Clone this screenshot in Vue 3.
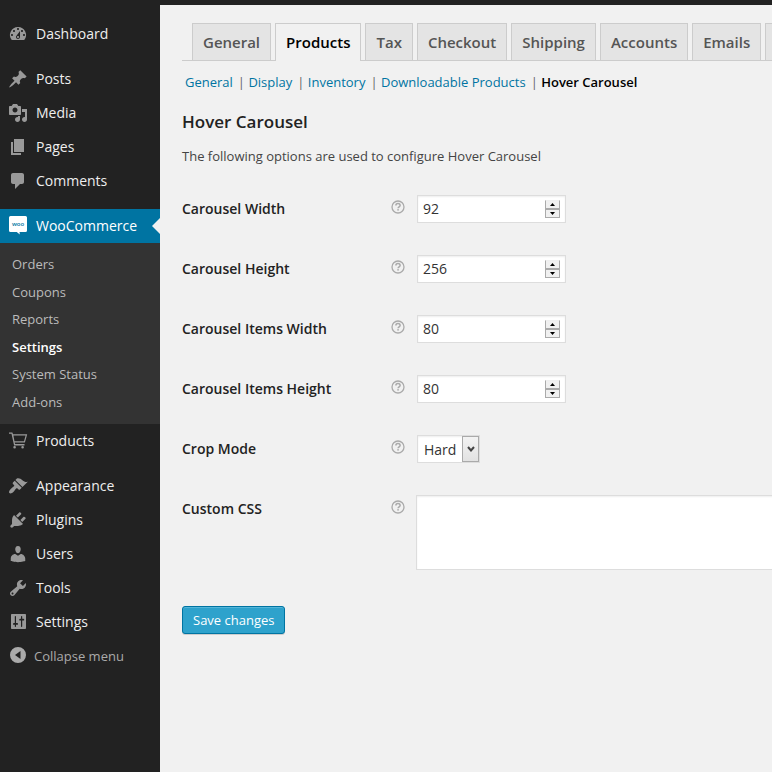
<script setup>
import { ref } from 'vue'

const icons = {
  dashboard: 'M3.76 16h12.48A7.998 7.998 0 0 0 10 3a7.998 7.998 0 0 0-6.24 13zM10 4c.55 0 1 .45 1 1s-.45 1-1 1-1-.45-1-1 .45-1 1-1zM6 6c.55 0 1 .45 1 1s-.45 1-1 1-1-.45-1-1 .45-1 1-1zm8 0c.55 0 1 .45 1 1s-.45 1-1 1-1-.45-1-1 .45-1 1-1zm-5.37 5.55L12 7v6c0 1.1-.9 2-2 2s-2-.9-2-2c0-.57.24-1.08.63-1.45zM4 10c.55 0 1 .45 1 1s-.45 1-1 1-1-.45-1-1 .45-1 1-1zm12 0c.55 0 1 .45 1 1s-.45 1-1 1-1-.45-1-1 .45-1 1-1zm-5 3c0-.55-.45-1-1-1s-1 .45-1 1 .45 1 1 1 1-.45 1-1z',
  posts: 'M10.44 3.02l1.82-1.82 6.36 6.35-1.83 1.82c-1.05-.68-2.48-.57-3.41.36l-.75.75c-.92.93-1.04 2.35-.35 3.41l-1.83 1.82-2.41-2.41-2.8 2.79c-.42.42-3.38 2.71-3.8 2.29s1.86-3.39 2.28-3.81l2.79-2.79L4.1 9.36l1.83-1.82c1.05.69 2.48.57 3.4-.36l.75-.75c.93-.92 1.05-2.35.36-3.41z',
  media: 'M13 11V4c0-.55-.45-1-1-1h-1.67L9 1H5L3.67 3H2c-.55 0-1 .45-1 1v7c0 .55.45 1 1 1h10c.55 0 1-.45 1-1zM7 4.5c1.38 0 2.5 1.12 2.5 2.5S8.38 9.5 7 9.5 4.5 8.38 4.5 7 5.62 4.5 7 4.5zM14 6h5v10.5c0 1.38-1.12 2.5-2.5 2.5S14 17.88 14 16.5s1.12-2.5 2.5-2.5c.17 0 .34.02.5.05V9h-3V6zm-4 8.05V13h2v3.5c0 1.38-1.12 2.5-2.5 2.5S7 17.88 7 16.5 8.12 14 9.5 14c.17 0 .34.02.5.05z',
  pages: 'M6 15V2h10v13H6zm-1 1h8v2H3V5h2v11z',
  comments: 'M5 2h9c1.1 0 2 .9 2 2v7c0 1.1-.9 2-2 2h-2l-5 5v-5H5c-1.1 0-2-.9-2-2V4c0-1.1.9-2 2-2z',
  products: 'M1 1.5h3.4l.6 1.8h14.2l-2.3 8.2H6.6l.6 1.6h9.3v1.3H6.1L3.5 2.8H1zM5.4 4.5l1.1 5.8h9.5l1.6-5.8zM6.6 15a1.3 1.3 0 1 1 0 2.6 1.3 1.3 0 0 1 0-2.6zM14.6 15a1.3 1.3 0 1 1 0 2.6 1.3 1.3 0 0 1 0-2.6z',
  appearance: 'M14.48 11.06L7.41 3.99l1.5-1.5c.5-.56 2.3-.47 3.51.32 1.21.8 1.43 1.28 2.91 2.1 1.18.64 2.45 1.26 4.45.85zm-.71.71L6.7 4.7 4.93 6.47c-.39.39-.39 1.02 0 1.41l1.06 1.06c.39.39.39 1.03 0 1.42-.6.6-1.43 1.11-2.21 1.69-.35.26-.7.53-1.01.84C1.43 14.23.4 16.08 1.4 17.07c.99 1 2.84-.03 4.18-1.36.31-.31.58-.66.85-1.02.57-.78 1.08-1.61 1.69-2.21.39-.39 1.02-.39 1.41 0l1.06 1.06c.39.39 1.02.39 1.41 0z',
  plugins: 'M13.11 4.36L9.87 7.6 8 5.73l3.24-3.24c.35-.34 1.05-.2 1.56.32.52.51.66 1.21.31 1.55zm-8 1.77l.91-1.12 9.01 9.01-1.19.84c-.71.71-2.63 1.16-3.82 1.16H6.14L4.9 17.26c-.59.59-1.54.59-2.12 0-.59-.58-.59-1.53 0-2.12l1.24-1.24v-3.88c0-1.13.4-3.19 1.09-3.89zm7.26 3.97l3.24-3.24c.34-.35 1.04-.21 1.55.31.52.51.66 1.21.31 1.55l-3.24 3.25z',
  users: 'M10 9.25c-2.27 0-2.73-3.44-2.73-3.44C7 4.02 7.82 2 9.97 2c2.16 0 2.98 2.02 2.71 3.81 0 0-.41 3.44-2.68 3.44zm0 2.57L12.72 10c2.39 0 4.52 2.33 4.52 4.53v2.49s-3.65 1.13-7.24 1.13c-3.65 0-7.24-1.13-7.24-1.13v-2.49c0-2.25 1.94-4.48 4.47-4.48z',
  tools: 'M16.68 9.77c-1.34 1.34-3.3 1.67-4.95.99l-5.41 6.52c-.99.99-2.59.99-3.58 0s-.99-2.59 0-3.57l6.52-5.42c-.68-1.65-.35-3.61.99-4.95 1.28-1.28 3.12-1.62 4.72-1.06l-2.89 2.89 2.82 2.82 2.86-2.87c.53 1.58.18 3.39-1.08 4.65zM3.81 16.21c.4.39 1.04.39 1.43 0 .4-.4.4-1.04 0-1.43-.39-.4-1.03-.4-1.43 0-.39.39-.39 1.03 0 1.43z',
  settings: 'M18 16V3c0-.55-.45-1-1-1H4c-.55 0-1 .45-1 1v13c0 .55.45 1 1 1h13c.55 0 1-.45 1-1zM8 11h1c.55 0 1 .3 1 .9s-.45.9-1 .9H8v1.7c0 .28-.22.5-.6.5s-.6-.22-.6-.5v-1.7H6c-.55 0-1-.3-1-.9s.45-.9 1-.9h.8V4.5c0-.28.22-.5.6-.5s.6.22.6.5V11zm5-2.4h-.8c-.55 0-1-.3-1-.9s.45-.9 1-.9h.8V4.5c0-.28.22-.5.6-.5s.6.22.6.5v2.3h1c.55 0 1 .3 1 .9s-.45.9-1 .9h-1v5.9c0 .28-.22.5-.6.5s-.6-.22-.6-.5V8.6z',
}

const menuGroups = [
  [{ label: 'Dashboard', icon: 'dashboard' }],
  [
    { label: 'Posts', icon: 'posts' },
    { label: 'Media', icon: 'media' },
    { label: 'Pages', icon: 'pages' },
    { label: 'Comments', icon: 'comments' },
  ],
  [
    {
      label: 'WooCommerce',
      icon: 'woo',
      current: true,
      children: ['Orders', 'Coupons', 'Reports', 'Settings', 'System Status', 'Add-ons'],
    },
    { label: 'Products', icon: 'products' },
  ],
  [
    { label: 'Appearance', icon: 'appearance' },
    { label: 'Plugins', icon: 'plugins' },
    { label: 'Users', icon: 'users' },
    { label: 'Tools', icon: 'tools' },
    { label: 'Settings', icon: 'settings' },
  ],
]

const tabs = ['General', 'Products', 'Tax', 'Checkout', 'Shipping', 'Accounts', 'Emails']
const sections = ['General', 'Display', 'Inventory', 'Downloadable Products', 'Hover Carousel']

const fields = ref([
  { id: 'carousel-width', label: 'Carousel Width', type: 'number', value: 92 },
  { id: 'carousel-height', label: 'Carousel Height', type: 'number', value: 256 },
  { id: 'items-width', label: 'Carousel Items Width', type: 'number', value: 80 },
  { id: 'items-height', label: 'Carousel Items Height', type: 'number', value: 80 },
  { id: 'crop-mode', label: 'Crop Mode', type: 'select', value: 'Hard' },
  { id: 'custom-css', label: 'Custom CSS', type: 'textarea', value: '' },
])
</script>

<template>
  <div class="page">
    <aside class="sidebar">
      <nav aria-label="Main menu">
        <ul v-for="(group, g) in menuGroups" :key="g" class="menu-group">
          <li v-for="item in group" :key="item.label">
            <a href="#" class="menu-link" :class="{ current: item.current }">
              <svg v-if="item.icon === 'woo'" class="icon" viewBox="0 0 20 20" aria-hidden="true">
                <path fill="#fff" d="M3 0h14.500a1.500 1.500 0 0 1 1.500 1.500v13a1.500 1.500 0 0 1-1.500 1.500h-6l.3 2.500-3-2.500H2.500A1.500 1.500 0 0 1 1 14.500v-13A1.500 1.500 0 0 1 2.500 0z" />
                <text class="woo-text" x="10" y="10" text-anchor="middle">woo</text>
              </svg>
              <svg v-else class="icon" viewBox="0 0 20 20" aria-hidden="true">
                <path fill="currentColor" fill-rule="evenodd" :d="icons[item.icon]" />
              </svg>
              <span class="menu-label">{{ item.label }}</span>
            </a>
            <ul v-if="item.children" class="submenu">
              <li v-for="child in item.children" :key="child">
                <a href="#" :class="{ active: child === 'Settings' }">{{ child }}</a>
              </li>
            </ul>
          </li>
        </ul>
      </nav>
      <button type="button" class="collapse">
        <svg class="icon" viewBox="0 0 20 20" aria-hidden="true">
          <path fill="currentColor" fill-rule="evenodd" d="M10 1a8 8 0 1 1 0 16 8 8 0 0 1 0-16zM12.500 5L7 9l5.500 4z" />
        </svg>
        <span>Collapse menu</span>
      </button>
    </aside>

    <div class="body">
      <header class="topbar"></header>
      <main class="content">
        <nav class="tabs" aria-label="Settings tabs">
          <a v-for="tab in tabs" :key="tab" href="#" class="tab" :class="{ active: tab === 'Products' }">{{ tab }}</a>
          <a href="#" class="tab" aria-label="More settings"></a>
        </nav>
        <ul class="sections">
          <li v-for="(section, i) in sections" :key="section">
            <span v-if="i" class="divider">{{ '| ' }}</span>
            <a href="#" :class="{ active: section === 'Hover Carousel' }">{{ section }}</a>
          </li>
        </ul>
        <h1>Hover Carousel</h1>
        <p class="intro">The following options are used to configure Hover Carousel</p>
        <form @submit.prevent>
          <div v-for="field in fields" :key="field.id" class="row">
            <label :for="field.id">{{ field.label }}</label>
            <svg class="help" viewBox="0 0 14 14" aria-hidden="true">
              <circle cx="7" cy="7" r="6" fill="none" stroke="currentColor" stroke-width="1.300" />
              <path d="M4.900 5.600c0-1.300.9-2 2.100-2s2.100.7 2.100 1.800c0 1.400-2 1.500-2 2.800" fill="none" stroke="currentColor" stroke-width="1.500" />
              <rect x="6.300" y="9.100" width="1.500" height="1.500" fill="currentColor" />
            </svg>
            <div class="control">
              <div v-if="field.type === 'number'" class="number">
                <input :id="field.id" v-model.number="field.value" type="number" />
                <span class="spinner">
                  <button type="button" aria-label="Increase" @click="field.value++">
                    <svg viewBox="0 0 7 4" aria-hidden="true"><path d="M3.500 0L7 4H0z" /></svg>
                  </button>
                  <button type="button" aria-label="Decrease" @click="field.value--">
                    <svg viewBox="0 0 7 4" aria-hidden="true"><path d="M3.500 4L7 0H0z" /></svg>
                  </button>
                </span>
              </div>
              <div v-else-if="field.type === 'select'" class="select">
                <select :id="field.id" v-model="field.value">
                  <option>Hard</option>
                  <option>Soft</option>
                </select>
                <span class="select-arrow">
                  <svg viewBox="0 0 8 6" aria-hidden="true"><path d="M1 1l3 3.500L7 1" fill="none" stroke="#444" stroke-width="2" /></svg>
                </span>
              </div>
              <textarea v-else :id="field.id" v-model="field.value"></textarea>
            </div>
          </div>
          <button type="submit" class="save">Save changes</button>
        </form>
      </main>
    </div>
  </div>
</template>

<style>
body {
  background: #f1f1f1;
}
</style>

<style scoped>
* {
  box-sizing: border-box;
}

.page {
  display: flex;
  min-height: 100vh;
  overflow: hidden;
  background: #f1f1f1;
  color: #444;
  font-family: "Open Sans", "Noto Sans", sans-serif;
  font-size: 13px;
  line-height: 20px;
}

ul {
  margin: 0;
  padding: 0;
  list-style: none;
}

a {
  color: #0074a2;
  text-decoration: none;
}

button,
input,
select,
textarea {
  margin: 0;
  font-family: inherit;
}

.sidebar {
  flex: 0 0 160px;
  padding-top: 17px;
  background: #222;
}

.menu-group + .menu-group {
  margin-top: 11px;
}

.menu-link {
  position: relative;
  display: flex;
  align-items: center;
  gap: 8px;
  height: 34px;
  padding: 0 8px;
  color: #999;
  font-size: 14px;
}

.menu-label {
  color: #eee;
}

.menu-link.current {
  background: #0074a2;
}

.menu-link.current .menu-label {
  color: #fff;
}

.menu-link.current::after {
  content: "";
  position: absolute;
  top: 9px;
  right: 0;
  border: 8px solid transparent;
  border-left-width: 0;
  border-right-color: #f1f1f1;
}

.icon {
  flex: none;
  width: 20px;
  height: 20px;
}

.woo-text {
  fill: #0074a2;
  font-size: 6px;
  font-weight: 600;
}

.submenu {
  padding: 8px 0 7px;
  background: #333;
}

.submenu a {
  display: block;
  padding: 6px 12px;
  color: #bbb;
  line-height: 1.2;
}

.submenu a.active {
  color: #fff;
  font-weight: 600;
}

.collapse {
  display: flex;
  align-items: center;
  gap: 6px;
  width: 100%;
  height: 34px;
  padding: 0 8px;
  border: 0;
  background: none;
  color: #aaa;
  font-size: 13px;
}

.body {
  flex: 1;
  min-width: 0;
}

.topbar {
  height: 5px;
  background: #222;
}

.content {
  padding: 18px 0 40px 22px;
}

.tabs {
  display: flex;
  gap: 4px;
  padding-left: 10px;
  border-bottom: 1px solid #ccc;
  white-space: nowrap;
}

.tab {
  padding: 6px 10px;
  border: 1px solid #ccc;
  border-bottom: 0;
  background: #e4e4e4;
  color: #555;
  font-size: 15px;
  font-weight: 600;
  line-height: 24px;
}

.tab.active {
  margin-bottom: -1px;
  background: #f1f1f1;
  color: #000;
}

.sections {
  display: flex;
  padding: 11px 0 0 3px;
  white-space: nowrap;
}

.divider {
  margin-left: 5px;
  color: #666;
  white-space: pre;
}

.sections a.active {
  color: #000;
  font-weight: 600;
}

h1 {
  margin: 18px 0 0;
  color: #222;
  font-size: 17px;
  font-weight: 600;
  line-height: 24px;
}

.intro {
  margin: 12px 0 28px;
}

.row {
  display: grid;
  grid-template-columns: 198px 14px minmax(0, 1fr);
  column-gap: 11px;
  align-items: start;
  min-height: 60px;
}

.row label {
  color: #222;
  font-size: 14px;
  font-weight: 600;
  line-height: 30px;
}

.help {
  width: 14px;
  height: 14px;
  margin-top: 6px;
  color: #aaa;
}

.control {
  padding-top: 1px;
}

.number,
.select {
  position: relative;
  width: 149px;
  height: 28px;
  margin-left: 1px;
}

.select {
  width: 63px;
}

input,
select,
textarea {
  display: block;
  border: 1px solid #ddd;
  border-radius: 0;
  outline: 0;
  background: #fff;
  box-shadow: inset 0 1px 2px rgba(0, 0, 0, 0.07);
  color: #333;
  font-size: 14px;
}

input {
  appearance: textfield;
  width: 100%;
  height: 100%;
  padding: 0 24px 1px 5px;
}

input::-webkit-inner-spin-button {
  appearance: none;
}

select {
  appearance: none;
  width: 100%;
  height: 100%;
  padding: 0 20px 0 6px;
}

textarea {
  width: 100%;
  min-width: 400px;
  height: 75px;
  resize: none;
}

.spinner {
  position: absolute;
  top: 5px;
  right: 6px;
  display: grid;
  grid-template-rows: 9px 9px;
  width: 15px;
}

.spinner button {
  display: flex;
  align-items: center;
  justify-content: center;
  padding: 0;
  border: 1px solid #aaa;
  background: #f0f0f0;
}

.spinner button:first-child {
  border-top-color: #eee;
}

.spinner svg {
  width: 5px;
  height: 3px;
}

.select-arrow {
  position: absolute;
  top: 1px;
  right: 1px;
  bottom: 1px;
  display: flex;
  align-items: center;
  justify-content: center;
  width: 17px;
  border: 1px solid #aaa;
  background: linear-gradient(#f3f3f3, #e2e2e2);
  pointer-events: none;
}

.select-arrow svg {
  width: 8px;
  height: 6px;
}

.save {
  height: 28px;
  margin-top: 36px;
  padding: 0 10px;
  border: 1px solid #0074a2;
  border-radius: 3px;
  background: #2ea2cc;
  box-shadow: inset 0 1px 0 rgba(120, 200, 230, 0.5), 0 1px 0 rgba(0, 0, 0, 0.15);
  color: #fff;
  font-size: 13px;
  line-height: 26px;
}
</style>
